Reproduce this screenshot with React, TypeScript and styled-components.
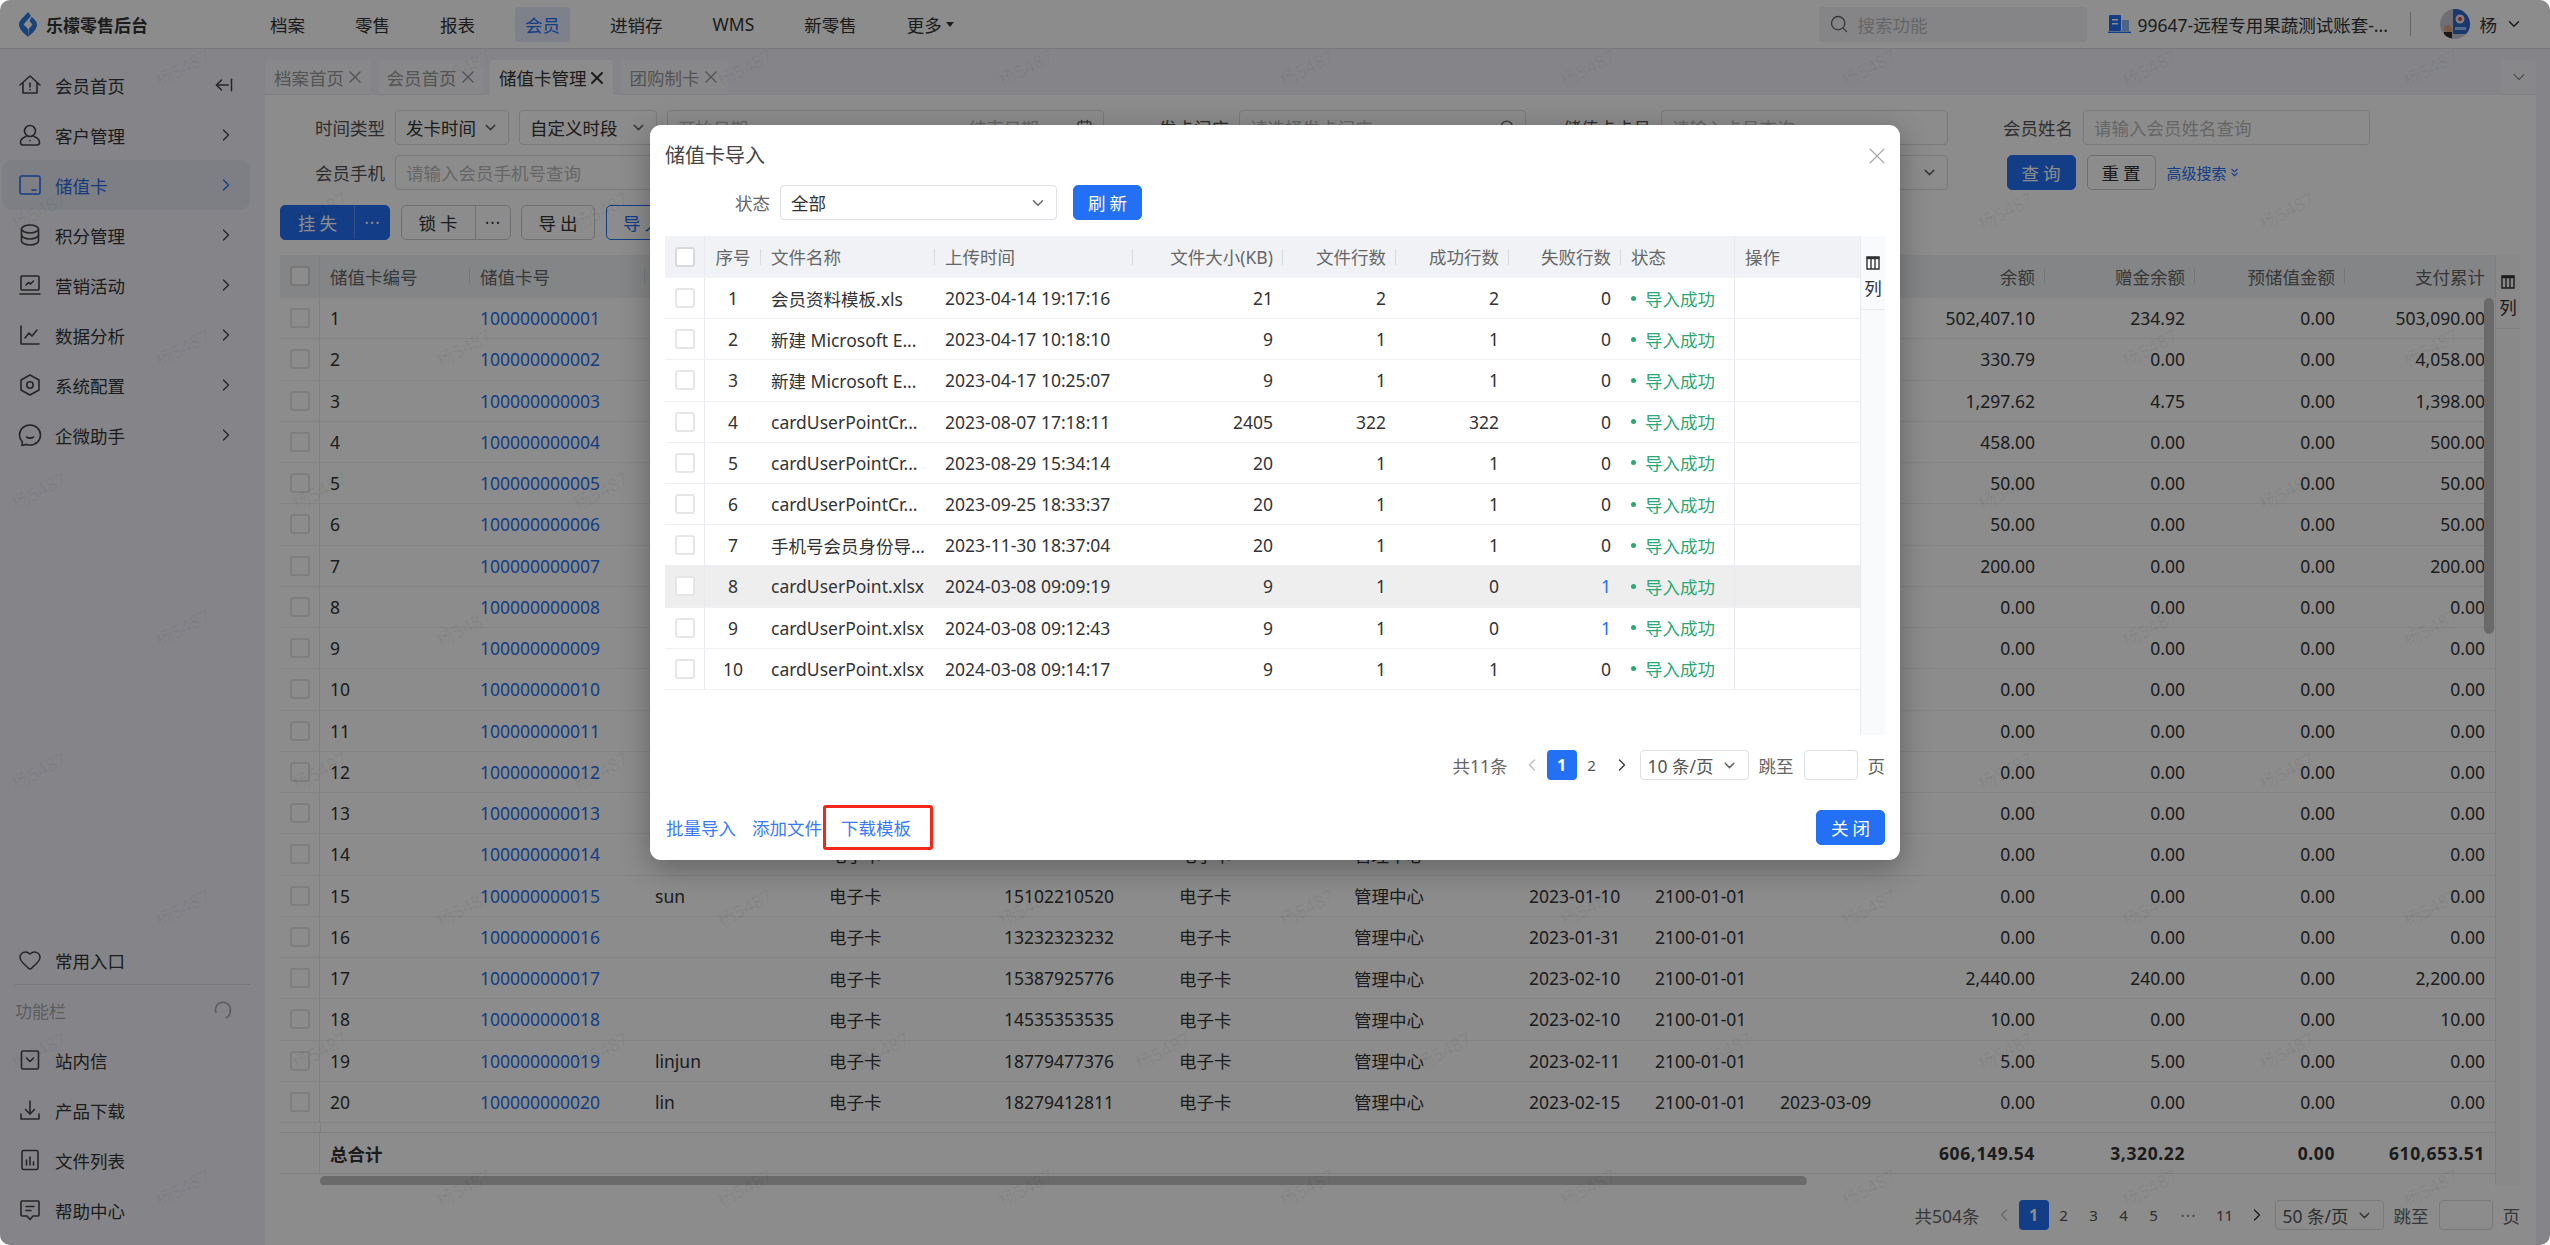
import React from 'react';
import styled, { createGlobalStyle } from 'styled-components';
import { ArrowLeftFromLine, ChevronDown, ChevronLeft, ChevronRight, ChevronsDown, Calendar, Heart, Search, X } from 'lucide-react';

const Global = createGlobalStyle`
  html, body { margin: 0; padding: 0; background: #fff; }
  body { font-family: "Noto Sans", "Noto Sans CJK SC", sans-serif; font-size: 17.5px; color: #333; }
  * { box-sizing: border-box; }
`;

const Frame = styled.div`
  position: relative; width: 2550px; height: 1245px; overflow: hidden; border-radius: 10px;
  display: flex; flex-direction: column; background: #f2f3fa;
`;
const Header = styled.header`
  height: 49px; flex: none; display: flex; align-items: center; background: #fff; border-bottom: 1px solid #dcdde2;
`;
const Brand = styled.div`
  width: 260px; flex: none; display: flex; align-items: center; gap: 9px; padding-left: 19px;
  font-size: 17px; font-weight: 700; color: #333;
`;
const TopNav = styled.nav` display: flex; gap: 30px; `;
const TopItem = styled.div<{ $active?: boolean }>`
  height: 35px; padding: 0 10px; display: flex; align-items: center; gap: 4px; border-radius: 4px;
  color: ${p => (p.$active ? '#2470f4' : '#333')}; background: ${p => (p.$active ? '#e5ecf9' : 'transparent')};
`;
const Caret = styled.i`
  width: 0; height: 0; border-left: 4px solid transparent; border-right: 4px solid transparent; border-top: 5px solid #333;
`;
const HeaderRight = styled.div` margin-left: auto; display: flex; align-items: center; padding-right: 27px; `;
const SearchBox = styled.div`
  width: 268px; height: 35px; background: #f2f3f7; border-radius: 4px; display: flex; align-items: center; gap: 9px;
  padding-left: 10px; color: #bbb; margin-right: 21px;
  svg { color: #666; }
`;
const Account = styled.span` margin-left: 7px; width: 245px; white-space: nowrap; `;
const VLine = styled.i` width: 1px; height: 24px; background: #bbb; margin: 0 29px 0 27px; `;
const Me = styled.span` margin: 0 8px 0 10px; `;

const Body = styled.div` flex: 1; display: flex; min-height: 0; `;
const Sidebar = styled.aside` width: 265px; flex: none; display: flex; flex-direction: column; padding: 11px 0 10px; `;
const NavRow = styled.div<{ $active?: boolean }>`
  height: 50px; width: 248px; margin-left: 2px; padding: 0 14px 0 16px; display: flex; align-items: center; gap: 13px;
  border-radius: 10px; color: ${p => (p.$active ? '#2470f4' : '#444')};
  background: ${p => (p.$active ? '#e3e8f2' : 'transparent')};
  span { color: ${p => (p.$active ? '#2a6ae0' : '#333')}; }
  > svg:last-child:not(:first-child) { margin-left: auto; }
`;
const Collapse = styled(ArrowLeftFromLine)` margin-right: 2px; `;
const SideSpacer = styled.div` flex: 1; `;
const SideLine = styled.div` height: 1px; width: 235px; margin-left: 15px; background: #d4d5da; margin-top: -1px; `;
const SideCaption = styled.div`
  height: 50px; width: 235px; margin-left: 15px; padding-right: 15px; display: flex; align-items: center; justify-content: space-between;
  color: #aaa; font-size: 17px;
`;

const Main = styled.main` flex: 1; min-width: 0; display: flex; flex-direction: column; padding-right: 14px; `;
const TabBar = styled.div` height: 46px; flex: none; padding-top: 11px; display: flex; gap: 7.5px; `;
const Tab = styled.div<{ $active?: boolean; $w: number }>`
  width: ${p => p.$w}px; height: 35px; padding-left: 9px; display: flex; align-items: center; gap: ${p => (p.$active ? 0 : 1)}px; white-space: nowrap;
  border-radius: 4px 4px 0 0; background: ${p => (p.$active ? '#fff' : '#f7f8fb')};
  border-bottom: ${p => (p.$active ? '0' : '1px solid #e2e3e8')};
  color: ${p => (p.$active ? '#333' : '#999')};
`;
const TabFold = styled.div`
  margin-left: auto; width: 35px; height: 35px; display: flex; align-items: center; justify-content: center; color: #999;
  background: #f7f8fb; border-bottom: 1px solid #e2e3e8; border-radius: 4px 4px 0 0;
`;
const Content = styled.div` flex: 1; min-height: 0; background: #fff; padding: 15px 16px 0 15px; `;

const FilterGrid = styled.div` display: grid; grid-template-columns: repeat(5, 401.5px); column-gap: 20.5px; row-gap: 10px; `;
const Field = styled.div<{ $span?: number }>`
  display: flex; align-items: center; gap: 10px; height: 35px; grid-column: span ${p => p.$span || 1};
`;
const FieldLabel = styled.label` width: 105px; flex: none; text-align: right; color: #555; white-space: nowrap; `;
const Control = styled.div<{ $w?: number; $grow?: boolean }>`
  height: 35px; border: 1px solid #dcdfe6; border-radius: 4px; background: #fff; padding: 0 9px 0 10px; display: flex; align-items: center;
  justify-content: space-between; color: #333; white-space: nowrap;
  ${p => (p.$w ? `width: ${p.$w}px; flex: none;` : '')}
  ${p => (p.$grow ? 'flex: 1; min-width: 0;' : '')}
  svg { color: #666; flex: none; }
`;
const Placeholder = styled.span` color: #bbb; `;
const DateGap = styled.span` width: 145px; `;
const FormBtns = styled.div` display: flex; align-items: center; gap: 11px; padding-left: 38.5px; height: 35px; `;
const Btn = styled.button<{ $primary?: boolean; $ghost?: boolean; $w?: number; $ml?: number }>`
  height: 35px; width: ${p => (p.$w ? p.$w + 'px' : 'auto')}; padding: 0; border-radius: 5px; font: inherit; letter-spacing: 4px;
  margin-left: ${p => p.$ml || 0}px;
  display: inline-flex; align-items: center; justify-content: center; text-indent: 4px; flex: none;
  background: ${p => (p.$primary ? '#2470f4' : '#fff')}; color: ${p => (p.$primary ? '#fff' : p.$ghost ? '#2470f4' : '#333')};
  border: 1px solid ${p => (p.$primary ? '#2470f4' : p.$ghost ? '#2470f4' : '#c8ccd4')};
`;
const AdvLink = styled.span`
  color: #2470f4; font-size: 15px; display: inline-flex; align-items: center; white-space: nowrap;
  svg { margin-left: 1px; }
`;
const Actions = styled.div` display: flex; gap: 10.5px; margin-top: 15px; height: 35px; `;
const BtnGroup = styled.div<{ $primary?: boolean }>`
  display: flex; height: 35px; border-radius: 5px; overflow: hidden;
  border: 1px solid ${p => (p.$primary ? '#2470f4' : '#c8ccd4')};
  background: ${p => (p.$primary ? '#2470f4' : '#fff')}; color: ${p => (p.$primary ? '#fff' : '#333')};
`;
const GroupMain = styled.div<{ $primary?: boolean }>`
  width: 74px; display: flex; align-items: center; justify-content: center; letter-spacing: 4px; text-indent: 4px;
  border-right: 1px solid ${p => (p.$primary ? '#5b93f6' : '#c8ccd4')};
`;
const GroupMore = styled.div` width: 34px; display: flex; align-items: center; justify-content: center; letter-spacing: 2px; text-indent: 2px; font-size: 9px; `;

const TableArea = styled.div<{ $h: number; $mt: number }>` position: relative; display: flex; height: ${p => p.$h}px; margin-top: ${p => p.$mt}px; `;
const TableBody = styled.div` flex: 1; min-width: 0; overflow: hidden; `;
const GridRow = styled.div<{ $cols: string; $h: number; $head?: boolean; $hover?: boolean; $bold?: boolean; $line?: string }>`
  display: grid; grid-template-columns: ${p => p.$cols}; height: ${p => p.$h}px;
  background: ${p => (p.$head ? '#f0f2f5' : p.$hover ? '#eeeeee' : 'transparent')};
  font-weight: ${p => (p.$bold ? 700 : 400)};
  border-bottom: 1px solid ${p => p.$line || (p.$head ? '#f0f2f5' : '#eef0f4')};
  color: ${p => (p.$head ? '#666' : '#333')};
`;
const Cell = styled.div<{ $align?: string; $pad?: number; $sep?: boolean; $rule?: boolean; $color?: string }>`
  position: relative; display: flex; align-items: center; min-width: 0; white-space: nowrap; overflow: hidden;
  padding: 0 ${p => p.$pad ?? 10}px;
  justify-content: ${p => (p.$align === 'right' ? 'flex-end' : p.$align === 'center' ? 'center' : 'flex-start')};
  ${p => (p.$color ? `color: ${p.$color};` : '')}
  ${p => (p.$rule ? 'border-right: 1px solid #e8eaee;' : '')}
  ${p => (p.$sep ? `&::after { content: ''; position: absolute; right: 0; top: 50%; height: 16px; margin-top: -8px; width: 1px; background: #d8dbe0; }` : '')}
`;
const TotalNum = styled.span` letter-spacing: .6px; `;
const Check = styled.i<{ $dark?: boolean }>`
  display: block; width: 20px; height: 20px; background: #fff; border: 2px solid ${p => (p.$dark ? '#d9d9d9' : '#e6e6e6')}; border-radius: 3px;
`;
const Ellip = styled.span` overflow: hidden; text-overflow: ellipsis; `;
const Link = styled.span` color: #2470f4; `;
const Spacer = styled.div`
  height: 10px; border-bottom: 1px solid #e4e7ed;
  &::before { content: ''; display: block; width: 40px; height: 10px; border-right: 1px solid #e8eaee; }
`;
const HScroll = styled.div` margin: 2px 0 0 40px; width: 1487px; height: 10px; border-radius: 5px; background: #c1c1c1; `;
const VScroll = styled.div` position: absolute; left: 2204px; top: 43px; width: 10px; height: 336px; border-radius: 5px; background: #c1c1c1; `;
const ColPanel = styled.div`
  width: 25px; flex: none; background: #f9fafc; border-left: 1px solid #e8eaee; color: #333;
`;
const ColHead = styled.div`
  height: 74px; display: flex; flex-direction: column; align-items: center; gap: 5px; padding-top: 20px; border-bottom: 1px solid #e8eaee;
`;

const PagerRow = styled.div<{ $mt: number }>` display: flex; justify-content: flex-end; align-items: center; height: 30px; margin-top: ${p => p.$mt}px; color: #666; `;
const PagerTotal = styled.span` margin-right: 9px; `;
const PageCell = styled.div<{ $on?: boolean; $w?: number; $off?: boolean }>`
  width: ${p => p.$w || 30}px; height: 30px; display: flex; align-items: center; justify-content: center; border-radius: 4px; font-size: ${p => (p.$on ? 16 : 15)}px;
  font-weight: ${p => (p.$on ? 700 : 400)};
  background: ${p => (p.$on ? '#2470f4' : 'transparent')}; color: ${p => (p.$on ? '#fff' : p.$off ? '#bbb' : '#555')};
`;
const Dots = styled.span` font-size: 9px; letter-spacing: 2px; text-indent: 2px; color: #888; `;
const PagerSelect = styled(Control)` width: 109px; height: 30px; margin-left: 3px; padding: 0 10px 0 7px; color: #555; `;
const Jump = styled.span` margin: 0 10px; `;
const JumpInput = styled.div` width: 54px; height: 30px; border: 1px solid #dcdfe6; border-radius: 4px; background: #fff; `;
const JumpUnit = styled.span` margin-left: 10px; `;

const Watermarks = styled.div` position: absolute; inset: 0; pointer-events: none; `;
const Mark = styled.span`
  position: absolute; font-size: 18px; color: rgba(0,0,0,.06); transform: translate(-50%, -50%) rotate(-28deg); white-space: nowrap;
`;

const Overlay = styled.div`
  position: absolute; inset: 0; background: rgba(0,0,0,.45); display: flex; justify-content: center; align-items: flex-start; padding-top: 125px;
`;
const Modal = styled.section`
  position: relative; width: 1250px; height: 735px; background: #fff; border-radius: 11px; padding: 18px 15px 0; box-shadow: 0 8px 30px rgba(0,0,0,.3);
`;
const ModalTitle = styled.h2` margin: 0; font-size: 20px; font-weight: 400; line-height: 26px; color: #444; `;
const CloseBtn = styled.div` position: absolute; right: 9.5px; top: 17px; color: #aaa; line-height: 0; `;
const ModalFilter = styled.div` display: flex; align-items: center; margin-top: 16px; height: 35px; padding-left: 70px; gap: 10px; `;
const FilterName = styled.span` color: #666; `;
const FooterBar = styled.div` display: flex; align-items: center; height: 45px; margin-top: 25px; padding-left: 1px; `;
const FootLink = styled.span` color: #3a7bf5; white-space: nowrap; margin-right: 16px; `;
const Boxed = styled.span`
  margin-left: -15px; width: 110px; height: 45px; border: 3px solid #f5261a; border-radius: 3px; padding-left: 15px;
  display: flex; align-items: center; color: #3a7bf5; white-space: nowrap;
`;
const StatusOk = styled.span` color: #2aa876; display: inline-flex; align-items: center; gap: 9px; &::before { content: ''; width: 5px; height: 5px; border-radius: 50%; background: #2aa876; } `;
const FootRight = styled.div` margin-left: auto; `;

const Ic: React.FC<{ s?: number; children: React.ReactNode }> = ({ s = 24, children }) => (
  <svg width={s} height={s} viewBox="0 0 24 24" fill="none" stroke="currentColor" strokeWidth="1.6" strokeLinecap="round" strokeLinejoin="round">{children}</svg>
);
const Logo = () => (
  <svg width="18" height="25" viewBox="0 0 18 25">
    <path fill="#2f78e0" d="M9 0 L12 4 L4.500 12.500 L9 17 L9 25 C6 22 0 18 0 12.500 C0 8 6 4 9 0Z" />
    <path fill="#2f78e0" d="M12.800 4.800 C14 6.500 18 9 18 12.500 C18 18 12 22 9 25 L9.800 17 L13.500 12.500 L10.500 9Z" />
  </svg>
);
const StoreIcon = () => (
  <svg width="23" height="18" viewBox="0 0 23 18">
    <path fill="#2470f4" d="M2 0h10a1 1 0 0 1 1 1v15H1V1a1 1 0 0 1 1-1z" />
    <path fill="#fff" d="M4 4h6v1.600H4zM4 8h6v1.600H4z" />
    <path fill="#8fb2f0" d="M14 5h6a1 1 0 0 1 1 1v10h-7z" />
    <path fill="#2470f4" d="M0 16.600h23V18H0z" />
  </svg>
);
const Avatar = () => (
  <svg width="30" height="30" viewBox="0 0 30 30">
    <defs><clipPath id="av"><circle cx="15" cy="15" r="15" /></clipPath></defs>
    <g clipPath="url(#av)">
      <rect width="30" height="30" fill="#c9c9d2" />
      <rect x="13" y="0" width="17" height="25" fill="#2f69c8" />
      <circle cx="20" cy="10" r="4.500" fill="#f4dede" />
      <circle cx="20" cy="10" r="2" fill="#d64545" />
      <rect x="15" y="18" width="11" height="3" fill="#9fc0ee" />
      <circle cx="8" cy="20" r="4" fill="#e0a37c" />
      <rect x="4" y="23" width="8" height="7" fill="#3a2a22" />
    </g>
  </svg>
);
const ColIcon = () => (
  <svg width="14" height="14" viewBox="0 0 14 14" fill="none" stroke="#333">
    <path d="M1 1h12v12H1z" strokeWidth="1.400" /><path d="M0.500 2h13" strokeWidth="2.400" /><path d="M5 2v11M9 2v11" strokeWidth="1.400" />
  </svg>
);

const sideTop: [string, React.ReactNode][] = [
  ['会员首页', <><path d="M2 12 12 3l10 9" /><path d="M5 10v10h14V10" /><path d="M12 10v4" /><path d="M12 16.600v.1" /></>],
  ['客户管理', <><circle cx="12" cy="8" r="5.500" /><path d="M8 13.500c-3 1-5.500 3-5.500 6 0 1.500 1 2.500 2.500 2.500h14c1.500 0 2.500-1 2.500-2.500 0-3-2.500-5-5.500-6" /><path d="M12 17.500v.1" /></>],
  ['储值卡', <><rect x="2" y="3" width="20" height="18" rx="1.500" /><path d="M14 17h4" /></>],
  ['积分管理', <><ellipse cx="12" cy="6" rx="8.500" ry="4" /><path d="M3.500 6v12c0 2.200 3.800 4 8.500 4s8.500-1.800 8.500-4V6" /><path d="M3.500 12c0 2.200 3.800 4 8.500 4s8.500-1.800 8.500-4" /></>],
  ['营销活动', <><rect x="3" y="3" width="18" height="14" rx="1" /><path d="m8 12 2.500-2.500 2 1.500 3-3" /><path d="M2 21h20" /></>],
  ['数据分析', <><path d="M3 3v18h18" /><path d="m7 15 4-5 3 3 5-6" /></>],
  ['系统配置', <><path d="m12 2 9 5v10l-9 5-9-5V7z" /><circle cx="12" cy="12" r="3.200" /></>],
  ['企微助手', <><path d="M12 2C6 2 1.500 6.500 1.500 12c0 2.700 1 5 2.800 6.800L4 22.500l4.500-1.100c1.100.4 2.300.6 3.500.6 5.800 0 10.500-4.500 10.500-10S17.800 2 12 2z" /><path d="M8.500 14c2 1.300 5 1.300 7 0" /></>],
];
const sideBottom: [string, React.ReactNode][] = [
  ['站内信', <><rect x="3.500" y="3" width="17" height="18" rx="1.500" /><path d="m8.500 10 3.500 3.500 3.500-3.500" /></>],
  ['产品下载', <><path d="M12 3v13" /><path d="m7.500 11.500 4.500 4.500 4.500-4.500" /><path d="M3 16v5h18v-5" /></>],
  ['文件列表', <><rect x="4" y="2.500" width="16" height="19" rx="1.500" /><path d="M8.500 12v5M12 9v8M15.500 14v3" /></>],
  ['帮助中心', <><path d="M4 3h16a1 1 0 0 1 1 1v13a1 1 0 0 1-1 1h-5l-3 3.500L9 18H4a1 1 0 0 1-1-1V4a1 1 0 0 1 1-1z" /><path d="M8 8.500h8M8 12.500h5" /></>],
];

const MAIN_COLS = '40px 150px 175px 174px 175px 175px 175px 175px 126px 125px 125px 150px 150px 150px 150px';
const mainHead = ['储值卡编号', '储值卡号', '会员姓名', '卡类型', '手机号', '卡种', '发卡门店', '发卡日期', '有效日期', '挂失日期'];
const numHead = ['余额', '赠金余额', '预储值金额', '支付累计'];
type MainRow = { name?: string; phone?: string; from?: string; until?: string; lost?: string; m?: [string, string, string, string] };
const z: [string, string, string, string] = ['0.00', '0.00', '0.00', '0.00'];
const mainRows: MainRow[] = [
  { m: ['502,407.10', '234.92', '0.00', '503,090.00'] },
  { m: ['330.79', '0.00', '0.00', '4,058.00'] },
  { m: ['1,297.62', '4.75', '0.00', '1,398.00'] },
  { m: ['458.00', '0.00', '0.00', '500.00'] },
  { m: ['50.00', '0.00', '0.00', '50.00'] },
  { m: ['50.00', '0.00', '0.00', '50.00'] },
  { m: ['200.00', '0.00', '0.00', '200.00'] },
  {}, {}, {}, {}, {}, {}, {},
  { name: 'sun', phone: '15102210520', from: '2023-01-10', until: '2100-01-01' },
  { phone: '13232323232', from: '2023-01-31', until: '2100-01-01' },
  { phone: '15387925776', from: '2023-02-10', until: '2100-01-01', m: ['2,440.00', '240.00', '0.00', '2,200.00'] },
  { phone: '14535353535', from: '2023-02-10', until: '2100-01-01', m: ['10.00', '0.00', '0.00', '10.00'] },
  { name: 'linjun', phone: '18779477376', from: '2023-02-11', until: '2100-01-01', m: ['5.00', '5.00', '0.00', '0.00'] },
  { name: 'lin', phone: '18279412811', from: '2023-02-15', until: '2100-01-01', lost: '2023-03-09' },
];

const MODAL_COLS = '40px 56px 174px 198px 150px 113px 113px 112px 114px 125px';
const modalRows: [string, string, string, string, string, string][] = [
  ['会员资料模板.xls', '2023-04-14 19:17:16', '21', '2', '2', '0'],
  ['新建 Microsoft E...', '2023-04-17 10:18:10', '9', '1', '1', '0'],
  ['新建 Microsoft E...', '2023-04-17 10:25:07', '9', '1', '1', '0'],
  ['cardUserPointCr...', '2023-08-07 17:18:11', '2405', '322', '322', '0'],
  ['cardUserPointCr...', '2023-08-29 15:34:14', '20', '1', '1', '0'],
  ['cardUserPointCr...', '2023-09-25 18:33:37', '20', '1', '1', '0'],
  ['手机号会员身份导...', '2023-11-30 18:37:04', '20', '1', '1', '0'],
  ['cardUserPoint.xlsx', '2024-03-08 09:09:19', '9', '1', '0', '1'],
  ['cardUserPoint.xlsx', '2024-03-08 09:12:43', '9', '1', '0', '1'],
  ['cardUserPoint.xlsx', '2024-03-08 09:14:17', '9', '1', '1', '0'],
];

const marks: [number, number][] = [];
[67, 347, 627, 907, 1187].forEach(y => { for (let i = 0; i < 9; i++) marks.push([182 + 281 * i, y]); });
[210, 490, 770, 1050].forEach(y => { for (let i = 0; i < 9; i++) marks.push([38 + 281 * i, y]); });

const Pager: React.FC<{ total: string; pages: string[]; size: string; mt: number }> = ({ total, pages, size, mt }) => (
  <PagerRow $mt={mt}>
    <PagerTotal>{total}</PagerTotal>
    <PageCell $off><ChevronLeft size={20} strokeWidth={1.5} /></PageCell>
    {pages.map((p, i) => (
      <PageCell key={p + i} $on={i === 0} $w={p === '•••' ? 39 : p === '11' ? 34 : 30}>
        {p === '•••' ? <Dots>{p}</Dots> : p}
      </PageCell>
    ))}
    <PageCell><ChevronRight size={20} strokeWidth={1.5} color="#333" /></PageCell>
    <PagerSelect>{size}<ChevronDown size={17} /></PagerSelect>
    <Jump>跳至</Jump>
    <JumpInput />
    <JumpUnit>页</JumpUnit>
  </PagerRow>
);

export default function App() {
  return (
    <Frame>
      <Global />
      <Header>
        <Brand><Logo />乐檬零售后台</Brand>
        <TopNav>
          <TopItem>档案</TopItem>
          <TopItem>零售</TopItem>
          <TopItem>报表</TopItem>
          <TopItem $active>会员</TopItem>
          <TopItem>进销存</TopItem>
          <TopItem>WMS</TopItem>
          <TopItem>新零售</TopItem>
          <TopItem>更多<Caret /></TopItem>
        </TopNav>
        <HeaderRight>
          <SearchBox><Search size={20} strokeWidth={1.6} />搜索功能</SearchBox>
          <StoreIcon />
          <Account>99647-远程专用果蔬测试账套-...</Account>
          <VLine />
          <Avatar />
          <Me>杨</Me>
          <ChevronDown size={18} />
        </HeaderRight>
      </Header>
      <Body>
        <Sidebar>
          {sideTop.map(([label, icon], i) => (
            <NavRow key={label} $active={i === 2}>
              <Ic>{icon}</Ic>
              <span>{label}</span>
              {i === 0 ? <Collapse size={20} strokeWidth={1.8} /> : <ChevronRight size={20} strokeWidth={1.6} />}
            </NavRow>
          ))}
          <SideSpacer />
          <NavRow>
            <Heart size={24} strokeWidth={1.5} />
            <span>常用入口</span>
          </NavRow>
          <SideLine />
          <SideCaption>功能栏<Ic s={24}><path d="M5 14.500a7.500 7.500 0 1 1 14 0c0 2.500-1.500 4.500-4 5" /><path d="M19 11v3.500" /></Ic></SideCaption>
          {sideBottom.map(([label, icon]) => (
            <NavRow key={label}>
              <Ic>{icon}</Ic>
              <span>{label}</span>
            </NavRow>
          ))}
        </Sidebar>
        <Main>
          <TabBar>
            <Tab $w={105}>档案首页<X size={20} strokeWidth={1.6} /></Tab>
            <Tab $w={105}>会员首页<X size={20} strokeWidth={1.6} /></Tab>
            <Tab $w={123} $active>储值卡管理<X size={20} strokeWidth={2.4} /></Tab>
            <Tab $w={107}>团购制卡<X size={20} strokeWidth={1.6} /></Tab>
            <TabFold><ChevronDown size={20} strokeWidth={1.5} /></TabFold>
          </TabBar>
          <Content>
            <FilterGrid>
              <Field $span={2}>
                <FieldLabel>时间类型</FieldLabel>
                <Control $w={114}>发卡时间<ChevronDown size={17} /></Control>
                <Control $w={138}>自定义时段<ChevronDown size={17} /></Control>
                <Control $grow>
                  <Placeholder>开始日期</Placeholder><DateGap /><Placeholder>结束日期</Placeholder><Calendar size={17} />
                </Control>
              </Field>
              <Field><FieldLabel>发卡门店</FieldLabel><Control $grow><Placeholder>请选择发卡门店</Placeholder><Search size={17} /></Control></Field>
              <Field><FieldLabel>储值卡卡号</FieldLabel><Control $grow><Placeholder>请输入卡号查询</Placeholder></Control></Field>
              <Field><FieldLabel>会员姓名</FieldLabel><Control $grow><Placeholder>请输入会员姓名查询</Placeholder></Control></Field>
              <Field><FieldLabel>会员手机</FieldLabel><Control $grow><Placeholder>请输入会员手机号查询</Placeholder></Control></Field>
              <Field><FieldLabel>卡类型</FieldLabel><Control $grow><Placeholder>请选择</Placeholder></Control></Field>
              <Field><FieldLabel>卡种</FieldLabel><Control $grow><Placeholder>请选择</Placeholder></Control></Field>
              <Field><FieldLabel>卡状态</FieldLabel><Control $grow><Placeholder>请选择</Placeholder><ChevronDown size={17} /></Control></Field>
              <FormBtns>
                <Btn $primary $w={69}>查询</Btn>
                <Btn $w={69}>重置</Btn>
                <AdvLink>高级搜索<ChevronsDown size={13} strokeWidth={2} /></AdvLink>
              </FormBtns>
            </FilterGrid>
            <Actions>
              <BtnGroup $primary><GroupMain $primary>挂失</GroupMain><GroupMore>•••</GroupMore></BtnGroup>
              <BtnGroup><GroupMain>锁卡</GroupMain><GroupMore>•••</GroupMore></BtnGroup>
              <Btn $w={74}>导出</Btn>
              <Btn $ghost $w={74}>导入</Btn>
            </Actions>
            <TableArea $h={930} $mt={15}>
              <TableBody>
                <GridRow $cols={MAIN_COLS} $h={43} $head>
                  <Cell $align="center" $rule $pad={0}><Check $dark /></Cell>
                  {mainHead.map((h, i) => <Cell key={h} $sep={i < 9}>{h}</Cell>)}
                  {numHead.map((h, i) => <Cell key={h} $align="right" $sep={i < 3}>{h}</Cell>)}
                </GridRow>
                {mainRows.map((r, i) => (
                  <GridRow key={i} $cols={MAIN_COLS} $h={41.25}>
                    <Cell $align="center" $rule $pad={0}><Check /></Cell>
                    <Cell>{i + 1}</Cell>
                    <Cell><Link>{`1000000000${String(i + 1).padStart(2, '0')}`}</Link></Cell>
                    <Cell>{r.name}</Cell>
                    <Cell>电子卡</Cell>
                    <Cell>{r.phone}</Cell>
                    <Cell>电子卡</Cell>
                    <Cell>管理中心</Cell>
                    <Cell>{r.from}</Cell>
                    <Cell>{r.until}</Cell>
                    <Cell>{r.lost}</Cell>
                    {(r.m || z).map((v, k) => <Cell key={k} $align="right">{v}</Cell>)}
                  </GridRow>
                ))}
                <Spacer />
                <GridRow $cols={MAIN_COLS} $h={41} $bold $line="#e4e7ed">
                  <Cell $rule />
                  <Cell>总合计</Cell>
                  <Cell /><Cell /><Cell /><Cell /><Cell /><Cell /><Cell /><Cell /><Cell />
                  <Cell $align="right"><TotalNum>606,149.54</TotalNum></Cell>
                  <Cell $align="right"><TotalNum>3,320.22</TotalNum></Cell>
                  <Cell $align="right"><TotalNum>0.00</TotalNum></Cell>
                  <Cell $align="right"><TotalNum>610,653.51</TotalNum></Cell>
                </GridRow>
                <HScroll />
              </TableBody>
              <ColPanel><ColHead><ColIcon />列</ColHead></ColPanel>
              <VScroll />
            </TableArea>
            <Pager total="共504条" pages={['1', '2', '3', '4', '5', '•••', '11']} size="50 条/页" mt={15} />
          </Content>
        </Main>
      </Body>
      <Watermarks>
        {marks.map(([x, y]) => <Mark key={x + '-' + y} style={{ left: x, top: y }}>杨5487</Mark>)}
      </Watermarks>
      <Overlay>
        <Modal>
          <ModalTitle>储值卡导入</ModalTitle>
          <CloseBtn><X size={28} strokeWidth={1} /></CloseBtn>
          <ModalFilter>
            <FilterName>状态</FilterName>
            <Control $w={277}>全部<ChevronDown size={18} /></Control>
            <Btn $primary $w={69} $ml={6}>刷新</Btn>
          </ModalFilter>
          <TableArea $h={499} $mt={16}>
            <TableBody>
              <GridRow $cols={MODAL_COLS} $h={42} $head>
                <Cell $align="center" $rule $pad={0}><Check $dark /></Cell>
                <Cell $align="center" $sep $pad={0}>序号</Cell>
                <Cell $sep>文件名称</Cell>
                <Cell $sep>上传时间</Cell>
                <Cell $align="right" $sep>文件大小(KB)</Cell>
                <Cell $align="right" $sep>文件行数</Cell>
                <Cell $align="right" $sep>成功行数</Cell>
                <Cell $align="right" $sep>失败行数</Cell>
                <Cell $rule>状态</Cell>
                <Cell>操作</Cell>
              </GridRow>
              {modalRows.map((r, i) => (
                <GridRow key={i} $cols={MODAL_COLS} $h={41.2} $hover={i === 7}>
                  <Cell $align="center" $rule $pad={0}><Check /></Cell>
                  <Cell $align="center" $pad={0}>{i + 1}</Cell>
                  <Cell><Ellip>{r[0]}</Ellip></Cell>
                  <Cell>{r[1]}</Cell>
                  <Cell $align="right">{r[2]}</Cell>
                  <Cell $align="right">{r[3]}</Cell>
                  <Cell $align="right">{r[4]}</Cell>
                  <Cell $align="right" $color={r[5] === '1' ? '#2470f4' : undefined}>{r[5]}</Cell>
                  <Cell $rule><StatusOk>导入成功</StatusOk></Cell>
                  <Cell />
                </GridRow>
              ))}
            </TableBody>
            <ColPanel><ColHead><ColIcon />列</ColHead></ColPanel>
          </TableArea>
          <Pager total="共11条" pages={['1', '2']} size="10 条/页" mt={15} />
          <FooterBar>
            <FootLink>批量导入</FootLink>
            <FootLink>添加文件</FootLink>
            <Boxed>下载模板</Boxed>
            <FootRight><Btn $primary $w={69}>关闭</Btn></FootRight>
          </FooterBar>
        </Modal>
      </Overlay>
    </Frame>
  );
}
